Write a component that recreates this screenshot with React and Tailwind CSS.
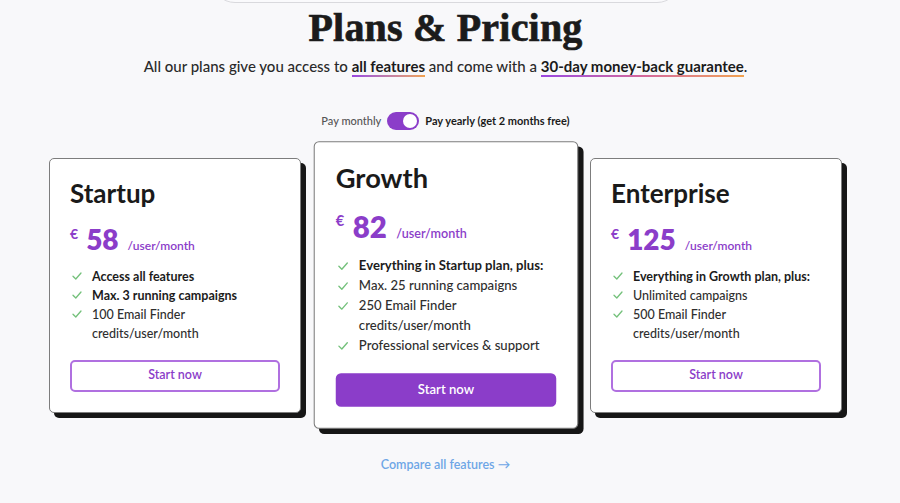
import React from "react";

const Check = () => (
  <svg width="10" height="8" viewBox="0 0 10 8" fill="none">
    <path d="M1 4.2 L3.8 7 L9 1" stroke="#74c17b" strokeWidth="1.3" strokeLinecap="round" strokeLinejoin="round" />
  </svg>
);

const plans = [
  {
    name: "Startup",
    price: "58",
    features: [
      { t: "Access all features", b: true },
      { t: "Max. 3 running campaigns", b: true },
      { t: "100 Email Finder credits/user/month" },
    ],
  },
  {
    name: "Growth",
    price: "82",
    primary: true,
    features: [
      { t: "Everything in Startup plan, plus:", b: true },
      { t: "Max. 25 running campaigns" },
      { t: "250 Email Finder credits/user/month" },
      { t: "Professional services & support" },
    ],
  },
  {
    name: "Enterprise",
    price: "125",
    features: [
      { t: "Everything in Growth plan, plus:", b: true },
      { t: "Unlimited campaigns" },
      { t: "500 Email Finder credits/user/month" },
    ],
  },
];

function Card({ plan }) {
  return (
    <div
      className={
        plan.primary
          ? "w-[252px] scale-105 rounded-[5px] border border-[#7d7d7d] bg-white px-5 pt-[18px] pb-5 shadow-[5px_5px_0_#161616]"
          : "w-[252px] rounded-[5px] border border-[#7d7d7d] bg-white px-5 pt-[18px] pb-5 shadow-[5px_5px_0_#161616]"
      }
    >
      <div className="text-[26px] leading-[32px] font-bold text-[#1a1a1a]">{plan.name}</div>
      <div className="mt-[14px] flex h-[32px] items-baseline text-[#8b3dc9]">
        <span className="mt-[4px] self-start text-[14px] leading-[14px] font-bold">€</span>
        <span className="ml-[8px] text-[28px] leading-[32px] font-extrabold">{plan.price}</span>
        <span className="ml-[9px] text-[12px] font-semibold">/user/month</span>
      </div>
      <ul className="mt-[12px]">
        {plan.features.map((f) => (
          <li key={f.t} className="flex items-start text-[12.5px] leading-[19px]">
            <span className="flex h-[19px] w-[22px] shrink-0 items-center pl-[2px]">
              <Check />
            </span>
            <span className={f.b ? "font-bold text-[#1c1c1c]" : "font-medium text-[#2e2e2e]"}>{f.t}</span>
          </li>
        ))}
      </ul>
      <button
        className={
          plan.primary
            ? "mt-[17px] flex h-[32px] w-full items-center justify-center rounded-[5px] border-2 border-[#8b3dc9] bg-[#8b3dc9] text-[12.5px] font-semibold text-white"
            : "mt-[17px] flex h-[32px] w-full items-center justify-center rounded-[5px] border-2 border-[#b070e0] bg-white text-[12.5px] font-semibold text-[#8b3dc9]"
        }
      >
        Start now
      </button>
    </div>
  );
}

export default function App() {
  return (
    <div className="h-[503px] w-[900px] overflow-hidden bg-[#f8f8fa] font-['Lato',sans-serif]">
      <div className="flex w-[891px] flex-col items-center">
        <div className="-mt-[45px] h-[48px] w-[470px] rounded-full border border-[#d9d9dd] bg-[#fafafc]" />
        <h1 className="mt-[3px] font-['Liberation_Serif',serif] text-[40px] leading-[44px] font-bold tracking-[0.2px] text-[#1b1b1b] [-webkit-text-stroke:0.7px_#1b1b1b]">
          Plans &amp; Pricing
        </h1>
        <p className="mt-[6px] text-[15px] leading-[20px] font-medium text-[#2a2a2a]">
          All our plans give you access to{" "}
          <span className="bg-linear-to-r from-[#9a45e0] to-[#f2a24c] bg-[length:100%_2px] bg-bottom bg-no-repeat pb-[2px] font-bold text-[#1b1b1b]">
            all features
          </span>{" "}
          and come with a{" "}
          <span className="bg-linear-to-r from-[#9a45e0] via-[#d4679b] to-[#f2a24c] bg-[length:100%_2px] bg-bottom bg-no-repeat pb-[2px] font-bold text-[#1b1b1b]">
            30-day money-back guarantee
          </span>
          .
        </p>
        <div className="mt-[36px] flex h-[17px] items-center text-[11px] leading-[17px]">
          <span className="font-medium text-[#555]">Pay monthly</span>
          <span className="ml-[6px] flex h-[18px] w-[32px] items-center justify-end rounded-full bg-[#8b3dc9] pr-[2px]">
            <span className="h-[14px] w-[14px] rounded-full bg-white" />
          </span>
          <span className="ml-[6px] font-bold text-[#1b1b1b]">Pay yearly (get 2 months free)</span>
        </div>
        <div className="mt-[19px] flex items-center gap-[18.5px]">
          {plans.map((p) => (
            <Card key={p.name} plan={p} />
          ))}
        </div>
        <a className="mt-[34px] text-[12.5px] leading-[18px] font-semibold text-[#6ea6e6]">
          Compare all features →
        </a>
      </div>
    </div>
  );
}
